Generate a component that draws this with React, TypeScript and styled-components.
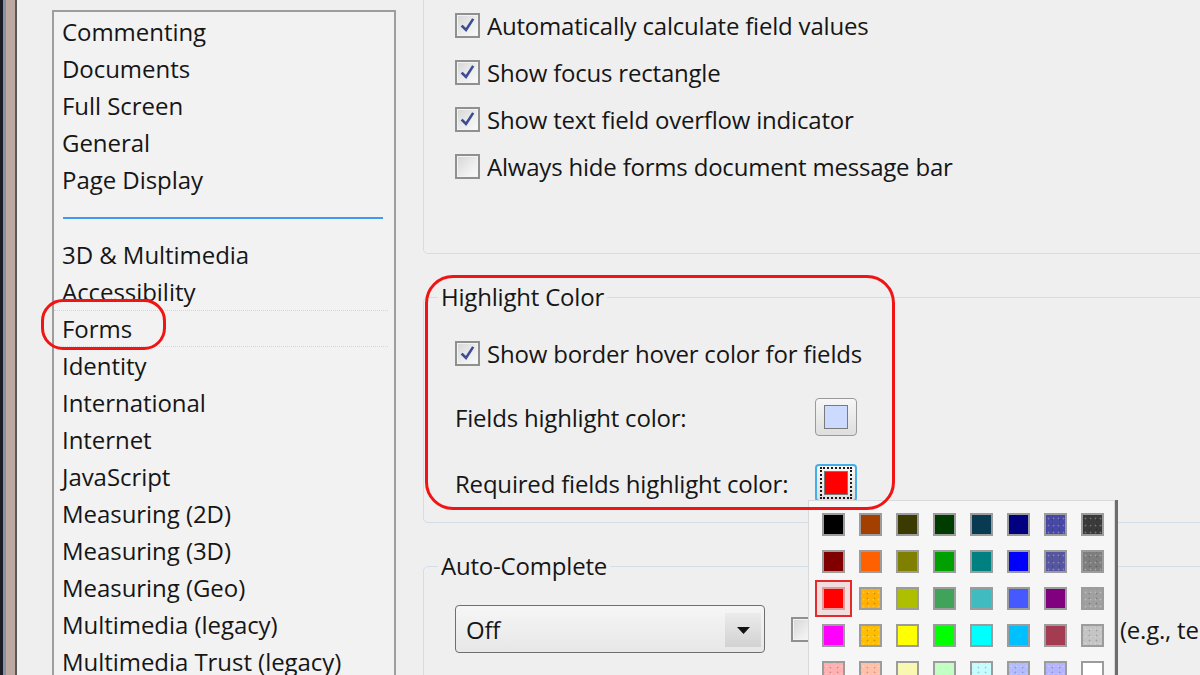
import React from 'react';
import styled, { createGlobalStyle, css } from 'styled-components';

const Global = createGlobalStyle`
  html, body { margin: 0; padding: 0; width: 1200px; height: 675px; overflow: hidden; background: #efefef; }
  body { font-family: "Open Sans", "Noto Sans", sans-serif; font-size: 24px; color: #161616; }
  * { box-sizing: border-box; }
`;

const Page = styled.div`
  position: relative;
  display: flex;
  align-items: flex-start;
  width: 1200px;
  height: 675px;
  overflow: hidden;
  background: #efefef;
`;

const WindowEdge = styled.div`
  flex: none;
  width: 17px;
  height: 675px;
  background: linear-gradient(to right, #1c1c28 0 3px, #8792a2 3px 6px, #bda9a1 6px 15px, #575757 15px 17px);
`;

const ListBox = styled.div`
  flex: none;
  margin: 10px 0 0 35px;
  width: 344px;
  height: 720px;
  border: 2px solid #9d9d9d;
  background: #f2f2f2;
  padding-top: 1px;
`;

const ListItem = styled.div<{ $hover?: boolean }>`
  height: 37px;
  line-height: 37px;
  padding-left: 8px;
  white-space: nowrap;
  letter-spacing: -0.05px;
  ${(p) =>
    p.$hover &&
    css`
      margin-right: 6px;
      border-top: 1px dotted #d6d6d6;
      border-bottom: 1px dotted #d6d6d6;
      line-height: 35px;
    `}
`;

const ListSeparator = styled.div`
  height: 2px;
  margin: 19px 11px 17px 9px;
  background: #3e9bf0;
`;

const RightPanel = styled.div`
  flex: none;
  display: flex;
  flex-direction: column;
  margin-left: 27px;
  width: 900px;
  letter-spacing: -0.2px;
`;

const TopGroup = styled.div`
  height: 254px;
  border: 1px solid #d3dde6;
  border-top: none;
  border-radius: 0 0 5px 5px;
  padding: 2px 0 0 31px;
`;

const Group = styled.fieldset<{ $height: number }>`
  margin: 28px 0 0 0;
  padding: 0 0 0 14px;
  min-width: 0;
  height: ${(p) => p.$height}px;
  border: 1px solid #d3dde6;
  border-radius: 5px;
`;

const Legend = styled.legend`
  padding: 0 3px;
  line-height: 30px;
  font-size: 24px;
  white-space: nowrap;
`;

const GroupBody = styled.div<{ $top: number }>`
  display: flex;
  flex-direction: column;
  padding: ${(p) => p.$top}px 0 0 17px;
`;

const CheckRow = styled.div<{ $h: number }>`
  display: flex;
  align-items: center;
  gap: 7px;
  height: ${(p) => p.$h}px;
  white-space: nowrap;
`;

const Box = styled.span`
  flex: none;
  display: inline-flex;
  align-items: center;
  justify-content: center;
  width: 25px;
  height: 25px;
  border: 2px solid #8f9090;
  background: linear-gradient(135deg, #d6d6d6 0%, #eeeeee 60%, #fafafa 100%);
  box-shadow: inset 0 0 0 1px #f3f3f3;
`;

const Checkbox = ({ checked }: { checked?: boolean }) => (
  <Box>
    {checked && (
      <svg width="17" height="17" viewBox="0 0 17 17">
        <path d="M3.5 9.5 L7 13 L13.5 3" fill="none" stroke="#3c4d96" strokeWidth="2.6" strokeLinecap="square" />
      </svg>
    )}
  </Box>
);

const ColorRow = styled.div<{ $gap: number }>`
  display: flex;
  align-items: center;
  height: 40px;
  margin-top: ${(p) => p.$gap}px;
  white-space: nowrap;
`;

const ColorLabel = styled.span`
  width: 360px;
  flex: none;
`;

const ColorButton = styled.div<{ $focus?: boolean }>`
  flex: none;
  display: flex;
  align-items: center;
  justify-content: center;
  width: 42px;
  height: 38px;
  border-radius: 4px;
  border: ${(p) => (p.$focus ? '2px solid #45aee8' : '1px solid #9a9a9a')};
  background: linear-gradient(#f7f7f7, #dedede);
`;

const FocusRing = styled.div<{ $focus?: boolean }>`
  display: flex;
  align-items: center;
  justify-content: center;
  padding: 2px;
  border: 2px dotted ${(p) => (p.$focus ? '#1a1a1a' : 'transparent')};
`;

const ButtonSwatch = styled.div<{ $color: string }>`
  width: 24px;
  height: 24px;
  border: 1px solid #7a7a7a;
  background: ${(p) => p.$color};
`;

const AutoRow = styled.div`
  display: flex;
  align-items: center;
  gap: 26px;
  margin-top: 24px;
  white-space: nowrap;
`;

const Select = styled.div`
  flex: none;
  display: flex;
  align-items: stretch;
  width: 310px;
  height: 48px;
  border: 1px solid #6f6f6f;
  border-radius: 4px;
  background: linear-gradient(#f6f6f6, #e7e7e7);
  padding: 7px 3px 5px 10px;
`;

const SelectText = styled.span`
  flex: 1;
  line-height: 34px;
`;

const SelectArrow = styled.span`
  width: 36px;
  display: flex;
  align-items: center;
  justify-content: center;
  background: linear-gradient(#ebebeb, #d2d2d2);
`;

const AutoCheck = styled.div`
  display: flex;
  align-items: center;
  gap: 4px;
`;

const Popup = styled.div`
  position: absolute;
  left: 808px;
  top: 500px;
  width: 307px;
  height: 190px;
  background: #f6f6f6;
  border: 1px solid #d9d9d9;
  box-shadow: 3px 0 0 #6d6d6d;
  padding: 5px 0 0 6px;
  display: grid;
  grid-template-columns: repeat(8, 37px);
  grid-auto-rows: 37px;
  align-content: start;
`;

const Cell = styled.div<{ $selected?: boolean }>`
  display: flex;
  align-items: center;
  justify-content: center;
  border: 2px solid ${(p) => (p.$selected ? '#e42a2a' : 'transparent')};
  background: ${(p) => (p.$selected ? '#f2dede' : 'transparent')};
`;

const Swatch = styled.div<{ $color: string; $dither?: boolean; $selected?: boolean }>`
  width: 23px;
  height: 23px;
  border: 2px solid ${(p) => (p.$selected ? '#e39a9a' : '#9c9c9c')};
  background-color: ${(p) => p.$color};
  ${(p) =>
    p.$dither &&
    css`
      background-image: radial-gradient(circle, rgba(255, 255, 255, 0.28) 0.7px, transparent 1.2px),
        radial-gradient(circle, rgba(0, 0, 0, 0.2) 0.7px, transparent 1.2px);
      background-size: 5px 7px, 7px 5px;
      background-position: 0 0, 3px 2px;
    `}
`;

const Annotation = styled.div<{ $l: number; $t: number; $w: number; $h: number; $r: number }>`
  position: absolute;
  left: ${(p) => p.$l}px;
  top: ${(p) => p.$t}px;
  width: ${(p) => p.$w}px;
  height: ${(p) => p.$h}px;
  border: 3px solid #f01414;
  border-radius: ${(p) => p.$r}px;
  pointer-events: none;
`;

const listTop = ['Commenting', 'Documents', 'Full Screen', 'General', 'Page Display'];
const listBottom = [
  '3D & Multimedia',
  'Accessibility',
  'Forms',
  'Identity',
  'International',
  'Internet',
  'JavaScript',
  'Measuring (2D)',
  'Measuring (3D)',
  'Measuring (Geo)',
  'Multimedia (legacy)',
  'Multimedia Trust (legacy)',
];

const palette: { c: string; d?: boolean }[] = [
  { c: '#000000' }, { c: '#a33f00' }, { c: '#3b3a00' }, { c: '#003c00' }, { c: '#083a52' }, { c: '#000080' }, { c: '#4848a6', d: true }, { c: '#3a3a3a', d: true },
  { c: '#800000' }, { c: '#ff6000' }, { c: '#808000' }, { c: '#00a000' }, { c: '#008080' }, { c: '#0000ff' }, { c: '#5656a0', d: true }, { c: '#7e7e7e', d: true },
  { c: '#ff0000' }, { c: '#ffb000', d: true }, { c: '#aebf00' }, { c: '#3fa35a' }, { c: '#40bcc0' }, { c: '#4658ff' }, { c: '#800080' }, { c: '#a0a0a0', d: true },
  { c: '#ff00ff' }, { c: '#ffbe00', d: true }, { c: '#ffff00' }, { c: '#00ff00' }, { c: '#00ffff' }, { c: '#00c0ff' }, { c: '#a33c50' }, { c: '#c4c4c4', d: true },
  { c: '#ffb0b0', d: true }, { c: '#ffbfa8', d: true }, { c: '#f8f8b2' }, { c: '#c2ffc2' }, { c: '#c4fcff', d: true }, { c: '#b2bcff', d: true }, { c: '#b4b4ff', d: true }, { c: '#ffffff' },
];

export default function App() {
  return (
    <Page>
      <Global />
      <WindowEdge />
      <ListBox>
        {listTop.map((t) => (
          <ListItem key={t}>{t}</ListItem>
        ))}
        <ListSeparator />
        {listBottom.map((t) => (
          <ListItem key={t} $hover={t === 'Forms'}>
            {t}
          </ListItem>
        ))}
      </ListBox>
      <RightPanel>
        <TopGroup>
          <CheckRow $h={47}>
            <Checkbox checked />
            Automatically calculate field values
          </CheckRow>
          <CheckRow $h={47}>
            <Checkbox checked />
            Show focus rectangle
          </CheckRow>
          <CheckRow $h={47}>
            <Checkbox checked />
            Show text field overflow indicator
          </CheckRow>
          <CheckRow $h={47}>
            <Checkbox />
            Always hide forms document message bar
          </CheckRow>
        </TopGroup>
        <Group $height={241}>
          <Legend>Highlight Color</Legend>
          <GroupBody $top={21}>
            <CheckRow $h={40}>
              <Checkbox checked />
              Show border hover color for fields
            </CheckRow>
            <ColorRow $gap={24}>
              <ColorLabel>Fields highlight color:</ColorLabel>
              <ColorButton>
                <FocusRing>
                  <ButtonSwatch $color="#cddaff" />
                </FocusRing>
              </ColorButton>
            </ColorRow>
            <ColorRow $gap={26}>
              <ColorLabel>Required fields highlight color:</ColorLabel>
              <ColorButton $focus>
                <FocusRing $focus>
                  <ButtonSwatch $color="#ff0000" />
                </FocusRing>
              </ColorButton>
            </ColorRow>
          </GroupBody>
        </Group>
        <Group $height={200}>
          <Legend>Auto-Complete</Legend>
          <GroupBody $top={0}>
            <AutoRow>
              <Select>
                <SelectText>Off</SelectText>
                <SelectArrow>
                  <svg width="13" height="7" viewBox="0 0 13 7">
                    <path d="M0 0 H13 L6.5 7 Z" fill="#111" />
                  </svg>
                </SelectArrow>
              </Select>
              <AutoCheck>
                <Checkbox />
                Remember numerical data (e.g., telephone numbers)
              </AutoCheck>
            </AutoRow>
          </GroupBody>
        </Group>
      </RightPanel>
      <Popup>
        {palette.map((p, i) => (
          <Cell key={i} $selected={i === 16}>
            <Swatch $color={p.c} $dither={p.d} $selected={i === 16} />
          </Cell>
        ))}
      </Popup>
      <Annotation $l={41} $t={299} $w={125} $h={51} $r={22} />
      <Annotation $l={425} $t={275} $w={470} $h={235} $r={28} />
    </Page>
  );
}
